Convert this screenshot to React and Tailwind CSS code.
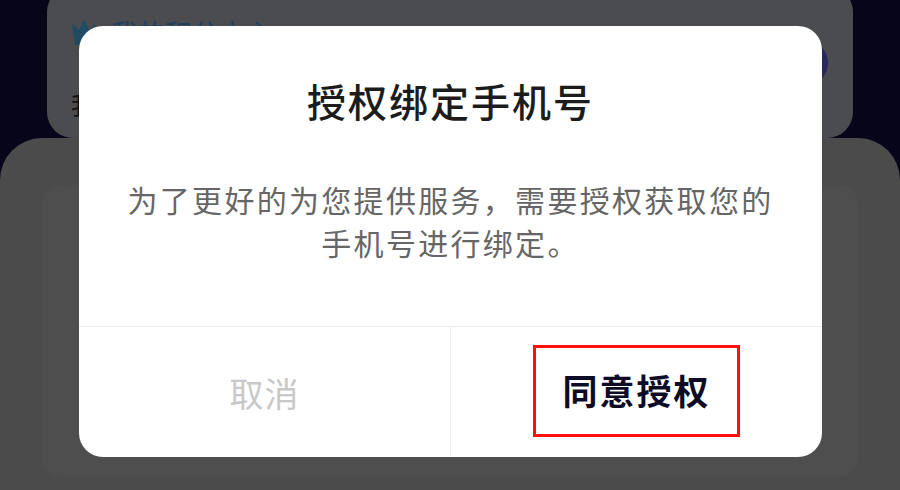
import React from 'react';

const font = { fontFamily: '"Noto Sans CJK SC", "Noto Sans", sans-serif' };

function BackgroundPage() {
  return (
    <div className="flex flex-col h-full">
      {/* Account card behind the dialog */}
      <div className="mx-[47px] -mt-[14px] h-[152px] shrink-0 overflow-hidden rounded-[26px] bg-[#4a4c50] pl-[24px] pt-[32px]">
        <div className="flex items-start gap-[14px]">
          <svg width="26" height="28" viewBox="0 0 26 28" className="shrink-0">
            <path d="M1 6 L8 12 L13 1 L18 12 L25 6 L22 27 L4 27 Z" fill="#1f4c63" />
          </svg>
          <span className="text-[27px] leading-[30px] text-[#223f5c]">我的积分中心</span>
          <div className="flex-1" />
          <div className="w-[110px] h-[46px] mt-[22px] mr-[25px] rounded-full bg-[#2a2660]" />
        </div>
        <div className="mt-[4px] text-[24px] leading-[28px] text-[#111]">我</div>
      </div>

      {/* Lower sheet */}
      <div className="flex-1 rounded-t-[42px] bg-[#4b4b4b] pt-[47px] px-[42px]">
        <div className="h-[292px] rounded-[18px] bg-[#4e4e4e]" />
      </div>
    </div>
  );
}

export default function App() {
  return (
    <div className="relative w-[900px] h-[490px] overflow-hidden bg-[#07051a]" style={font}>
      <BackgroundPage />

      {/* Dialog */}
      <div className="absolute left-[79px] top-[26px] w-[743px] h-[431px] flex flex-col rounded-[24px] bg-white overflow-hidden">
        <div className="pt-[50px] text-center text-[39px] leading-[48px] font-medium tracking-[2px] text-[#1c1c1c]">
          授权绑定手机号
        </div>
        <p className="mt-[54px] px-[30px] text-center text-[30px] leading-[43px] tracking-[2.3px] text-[#666666]">
          为了更好的为您提供服务，需要授权获取您的
          <br />
          手机号进行绑定。
        </p>
        <div className="flex-1" />
        <div className="h-[131px] flex border-t border-[#ececec]">
          <div className="flex-1 flex items-center justify-center text-[34px] tracking-[1px] text-[#c8c8c8]">
            取消
          </div>
          <div className="w-px bg-[#f0f0f0]" />
          <div className="flex-1 flex items-center justify-center">
            <div className="w-[207px] h-[92px] -mt-[3px] flex items-center justify-center border-[3px] border-[#ff1010] text-[35px] font-bold tracking-[2px] text-[#0d0b26]">
              同意授权
            </div>
          </div>
        </div>
      </div>
    </div>
  );
}
